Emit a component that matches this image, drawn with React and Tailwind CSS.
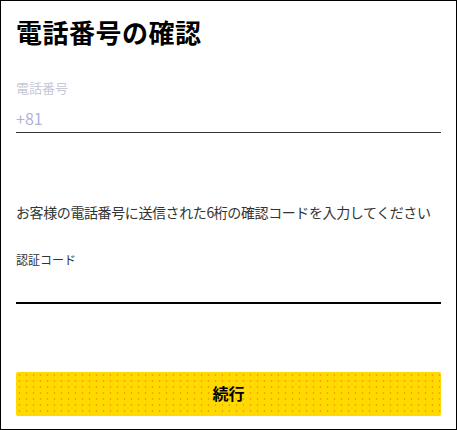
const font = { fontFamily: '"Noto Sans CJK JP", "Noto Sans", sans-serif' };

export default function App() {
  return (
    <div
      className="w-[457px] h-[430px] border border-black bg-white px-[15px] flex flex-col"
      style={font}
    >
      <h1 className="mt-[16px] text-[26px] leading-[30px] font-bold text-black tracking-[0.5px]">
        電話番号の確認
      </h1>

      <label className="mt-[33px] text-[13px] leading-[16px] text-[#c6c8d6]">電話番号</label>
      <div className="mt-3 pb-[4px] border-b border-[#333] text-[16px] leading-[20px] text-[#aeb3d9]">
        +81
      </div>

      <p className="mt-[70px] text-[14px] leading-[18px] text-[#333] tracking-[-0.4px]">
        お客様の電話番号に送信された6桁の確認コードを入力してください
      </p>

      <label className="mt-[31px] text-[12px] leading-[16px] text-[#333]">認証コード</label>
      <input
        type="text"
        className="h-[36px] border-b-2 border-black outline-none text-[16px]"
      />

      <button className="mt-[68px] h-[44px] w-full pb-[3px] rounded-[2px] bg-[#ffd900] bg-[radial-gradient(#f0a800_0.9px,transparent_1.2px)] bg-[length:7px_6px] text-[16px] font-bold text-black">
        続行
      </button>
    </div>
  );
}
